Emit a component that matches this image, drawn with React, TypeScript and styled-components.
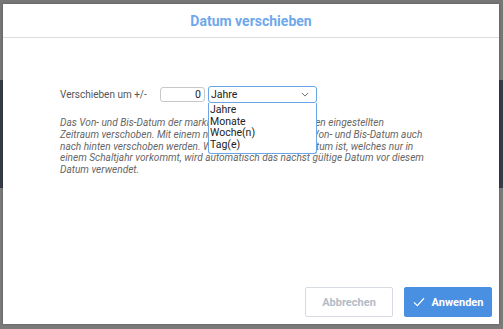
import React from "react";
import styled, { createGlobalStyle } from "styled-components";

const GlobalStyle = createGlobalStyle`
  html, body {
    margin: 0;
    padding: 0;
    width: 503px;
    height: 329px;
    overflow: hidden;
    background: #737373;
    font-family: Roboto, "Liberation Sans", Arial, sans-serif;
  }
`;

const units = ["Jahre", "Monate", "Woche(n)", "Tag(e)"];

const App = () => (
  <>
    <GlobalStyle />
    <Backdrop>
      <Band $h={80} $bg="#767676" />
      <Band $h={108} $bg="#363b47" />
      <Band $h={141} $bg="#7a7a7a" />
      <Modal>
        <Header>Datum verschieben</Header>
        <Body>
          <Row>
            <Label>Verschieben um +/-</Label>
            <NumberBox>0</NumberBox>
            <SelectWrap>
              <Select>
                Jahre
                <Chevron viewBox="0 0 10 6">
                  <path d="M1 1l4 4 4-4" />
                </Chevron>
              </Select>
              <Options>
                {units.map((u) => (
                  <Option key={u}>{u}</Option>
                ))}
              </Options>
            </SelectWrap>
          </Row>
          <Hint>
            Das Von- und Bis-Datum der markierten Einträge wird um den eingestellten
            <br />
            Zeitraum verschoben. Mit einem negativen Wert kann das Von- und Bis-Datum auch
            <br />
            nach hinten verschoben werden. Wenn das Ergebnis ein Datum ist, welches nur in
            <br />
            einem Schaltjahr vorkommt, wird automatisch das nächst gültige Datum vor diesem
            <br />
            Datum verwendet.
          </Hint>
        </Body>
        <Footer>
          <Button>Abbrechen</Button>
          <Button $primary>
            <CheckIcon viewBox="0 0 14 12">
              <path d="M1 6.5l4 4L13 1.5" />
            </CheckIcon>
            Anwenden
          </Button>
        </Footer>
      </Modal>
    </Backdrop>
  </>
);

export default App;

const Backdrop = styled.div`
  position: relative;
  width: 503px;
  height: 329px;
  display: flex;
  flex-direction: column;
`;

const Band = styled.div<{ $h: number; $bg: string }>`
  height: ${({ $h }) => $h}px;
  background: ${({ $bg }) => $bg};
  flex-shrink: 0;
`;

const Modal = styled.div`
  position: absolute;
  left: 3px;
  top: 4px;
  width: 496px;
  height: 320px;
  background: #fff;
  display: flex;
  flex-direction: column;
  box-shadow: 0 0 2px rgba(0, 0, 0, 0.3);
`;

const Header = styled.div`
  height: 33px;
  border-bottom: 1px solid #dcdcdc;
  display: flex;
  align-items: center;
  justify-content: center;
  color: #6ea8ec;
  font-size: 14px;
  font-weight: 700;
`;

const Body = styled.div`
  padding: 48px 0 0 57px;
  display: flex;
  flex-direction: column;
`;

const Row = styled.div`
  display: flex;
  align-items: center;
  height: 17px;
`;

const Label = styled.div`
  width: 100px;
  font-size: 10px;
  color: #555;
`;

const NumberBox = styled.div`
  width: 45px;
  height: 15px;
  box-sizing: border-box;
  border: 1px solid #c8c8c8;
  border-radius: 3px;
  text-align: right;
  padding-right: 3px;
  font-size: 10.5px;
  line-height: 13px;
  color: #222;
`;

const SelectWrap = styled.div`
  position: relative;
  margin-left: 3px;
  width: 109px;
`;

const Select = styled.div`
  height: 17px;
  box-sizing: border-box;
  border: 1px solid #6aa5ea;
  border-radius: 3px;
  padding: 0 4px 0 2px;
  display: flex;
  align-items: center;
  justify-content: space-between;
  font-size: 10.5px;
  color: #222;
`;

const Chevron = styled.svg`
  width: 8px;
  height: 5px;
  fill: none;
  stroke: #666;
  stroke-width: 1.2;
  margin-right: 3px;
`;

const Options = styled.div`
  position: absolute;
  top: 17px;
  left: 0;
  width: 109px;
  box-sizing: border-box;
  border: 1px solid #6aa5ea;
  border-top: none;
  border-radius: 0 0 3px 3px;
  background: #fff;
  padding: 1px 0 2px 1px;
`;

const Option = styled.div`
  font-size: 10.5px;
  line-height: 11.7px;
  color: #222;
`;

const Hint = styled.div`
  margin-top: 14px;
  font-size: 10.1px;
  line-height: 11.8px;
  font-style: italic;
  color: #666;
  white-space: nowrap;
`;

const Footer = styled.div`
  margin-top: auto;
  display: flex;
  justify-content: flex-end;
  gap: 11px;
  padding: 0 7px 7px 0;
`;

const Button = styled.div<{ $primary?: boolean }>`
  width: 88px;
  height: 30px;
  box-sizing: border-box;
  display: flex;
  align-items: center;
  justify-content: center;
  gap: 7px;
  font-size: 11px;
  font-weight: 700;
  border-radius: 2px;
  border: 1px solid ${({ $primary }) => ($primary ? "#4a90e2" : "#d6dbe1")};
  background: ${({ $primary }) => ($primary ? "#4a90e2" : "#fff")};
  color: ${({ $primary }) => ($primary ? "#fff" : "#b3bbc6")};
`;

const CheckIcon = styled.svg`
  width: 12px;
  height: 10px;
  fill: none;
  stroke: #fff;
  stroke-width: 1.4;
`;
